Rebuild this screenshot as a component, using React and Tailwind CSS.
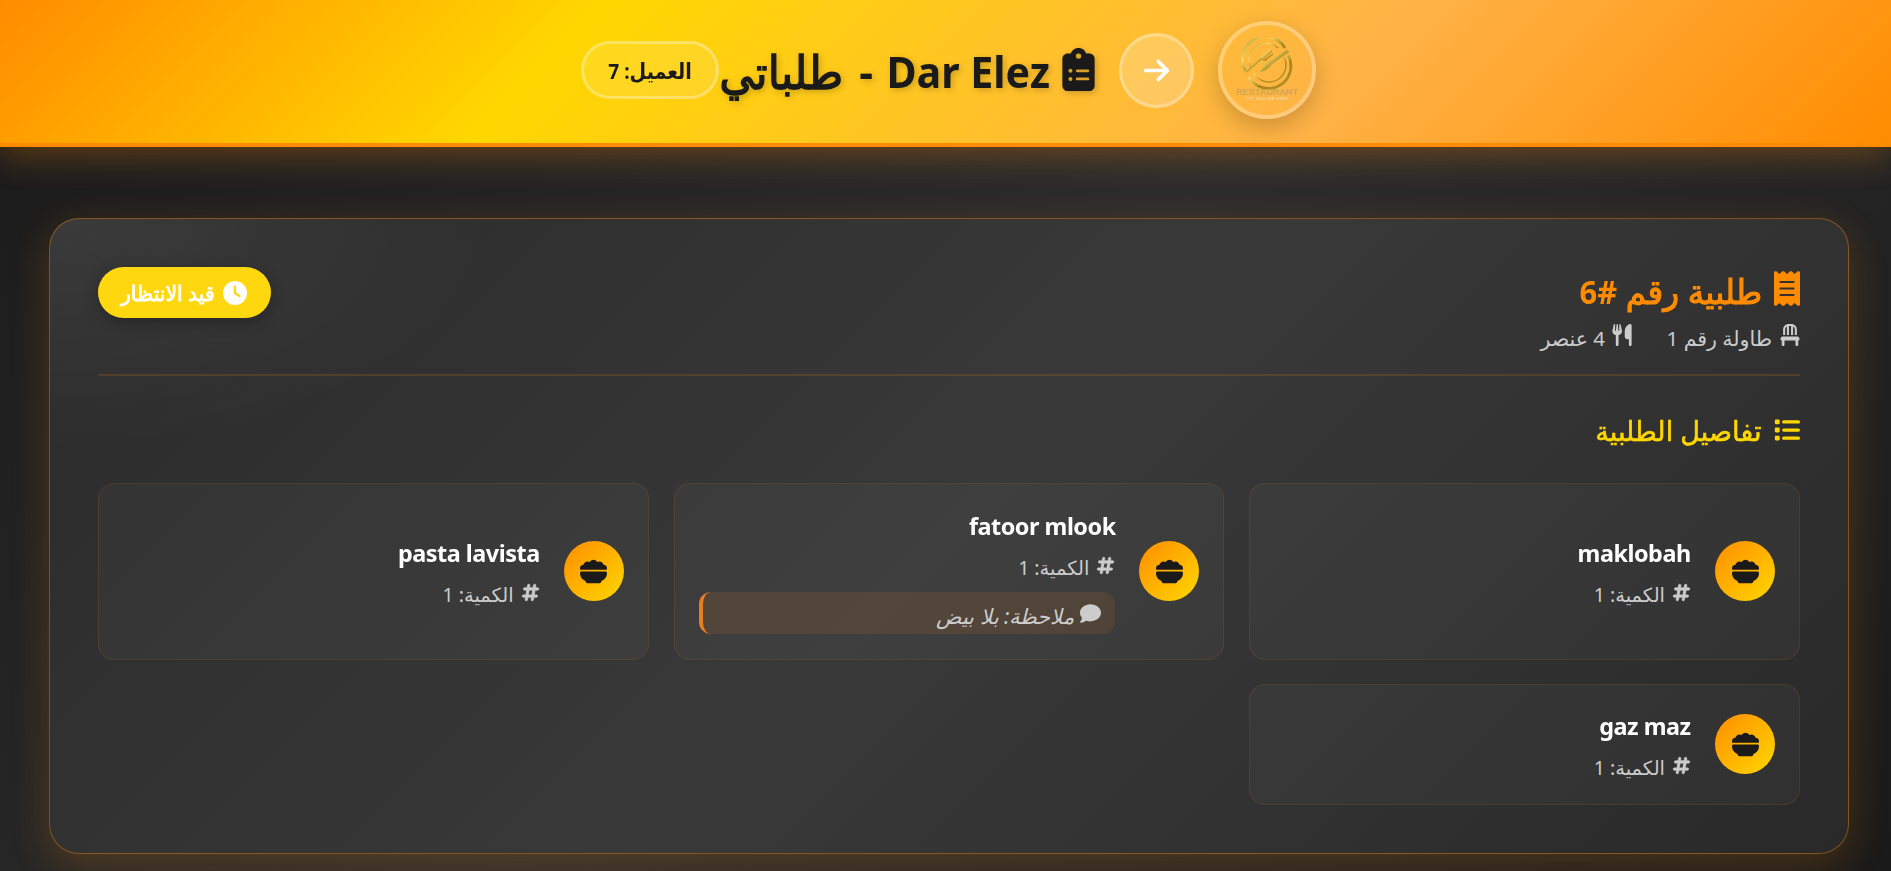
import React from "react";
import { FaClipboardList, FaArrowRight, FaReceipt, FaChair, FaUtensils, FaList, FaBowlFood, FaClock, FaHashtag, FaComment } from "react-icons/fa6";

const AR = "font-['Noto_Sans','DejaVu_Sans',sans-serif]";

function Logo() {
  return (
    <svg width="64" height="64" viewBox="0 0 64 64">
      <defs>
        <linearGradient id="gold" x1="0" y1="0" x2="1" y2="1">
          <stop offset="0" stopColor="#b8962f" />
          <stop offset="0.35" stopColor="#f0d868" />
          <stop offset="0.6" stopColor="#a68420" />
          <stop offset="1" stopColor="#b8942c" />
        </linearGradient>
      </defs>
      <g fill="none" stroke="url(#gold)">
        <path d="M10.500 33A22 22 0 0 1 50 10" strokeWidth="2.800" />
        <path d="M53 17A22 22 0 0 1 14 39" strokeWidth="2.800" />
        <path d="M15.500 29A17 17 0 0 1 43 10" strokeWidth="1.300" />
        <path d="M49 19A17 17 0 0 1 19 35" strokeWidth="1.300" />
        <path d="M11 34L28 19" strokeWidth="2" />
        <path d="M27 19L35 11M29 20L37 13M30 22L38 16M26 17Q26 23 32 22" strokeWidth="1.200" />
      </g>
      <path d="M25 34Q28 27 34 23.500L52 11L54 14L37 26Q32 33 25 34Z" fill="url(#gold)" />
      <text x="32" y="56.500" textAnchor="middle" textLength="62" lengthAdjust="spacingAndGlyphs" fontFamily="Liberation Sans" fontWeight="700" fontSize="8.500" fill="#cfa658">RESTAURANT</text>
      <text x="32" y="61.500" textAnchor="middle" textLength="42" fontFamily="Liberation Sans" fontWeight="700" fontSize="3.500" fill="#f0d8a4">TXT TAGLINE HERE</text>
    </svg>
  );
}

function Item({ name, note }) {
  return (
    <div className="flex items-center gap-6 rounded-[16px] border border-[#ff8c00]/10 bg-white/[0.03] px-6">
      <div className="flex size-[60px] shrink-0 items-center justify-center rounded-full bg-linear-135 from-[#ff8c00] to-[#ffd700] text-[#1a1a1a]">
        <FaBowlFood size={27} />
      </div>
      <div className="min-w-0 grow">
        <div dir="ltr" className="h-9 origin-right scale-x-[0.975] text-right text-[24px] leading-[35px] font-bold tracking-[-0.5px] text-white">{name}</div>
        <div className="mt-2 flex h-7 items-center gap-[7px] text-[#cccccc]">
          <FaHashtag size={19} className="mb-0.5 stroke-current stroke-[20px]" />
          <span className="pt-[3px] text-[19.5px]">الكمية: 1</span>
        </div>
        {note && (
          <div className="mt-3 flex h-[42px] items-center gap-1.5 rounded-[12px] border-l-4 border-[#e67e22] bg-[#e67e22]/12 pr-[14px] text-[#cccccc]">
            <FaComment size={21} />
            <span className="pt-1.5 text-[21px] leading-none italic">{note}</span>
          </div>
        )}
      </div>
    </div>
  );
}

export default function App() {
  return (
    <div dir="rtl" className={`h-[871px] overflow-hidden bg-[linear-gradient(135deg,#1a1a1a_0%,#2d2d2d_50%,#1a1a1a_100%)] ${AR}`}>
      <header className="relative flex h-[147px] items-center justify-center border-b-4 border-[#ff8c00] bg-[linear-gradient(135deg,#ff8c00_0%,#ffd700_30%,#ffb347_70%,#ff8c00_100%)] pb-[3px] pl-[6px] shadow-[0_8px_32px_rgba(255,140,0,0.3)]">
        <div className="ml-6 flex size-[98px] items-center justify-center rounded-full border-4 border-white/30 shadow-[0_8px_25px_rgba(0,0,0,0.2)]">
          <Logo />
        </div>
        <div className="ml-6 flex size-[75px] items-center justify-center rounded-full border-[3px] border-white/30 bg-white/20 text-white">
          <FaArrowRight size={29} />
        </div>
        <h1 className="flex w-[376px] items-center text-[43px] leading-none font-bold whitespace-nowrap text-[#1a1a1a] drop-shadow-[2px_2px_3px_rgba(0,0,0,0.2)]">
          <FaClipboardList size={43} className="mb-0.5 ml-3 w-[33px] shrink-0" />
          <span dir="ltr" className="w-[177px] shrink-0 origin-right scale-x-[0.957] pt-[3px] text-right">Dar Elez</span>
          <span className="w-[30px] shrink-0 pt-[3px]">-</span>
          <span className="w-[122px] shrink-0 origin-right scale-x-[0.945] pt-0.5 text-[46px] font-normal [-webkit-text-stroke:1.4px_#1a1a1a]">طلباتي</span>
        </h1>
        <div className="flex h-[58px] w-[138px] items-center justify-center rounded-full border-[3px] border-white/30 bg-white/10 text-[22px] font-bold text-[#1a1a1a]">
          <span className="scale-x-[0.87] pt-px whitespace-nowrap">العميل: 7</span>
        </div>
      </header>
      <main className="pt-[71px] pr-[42px] pl-[49px]">
        <section className="h-[636px] rounded-[30px] border border-[#ff8c00]/40 bg-[radial-gradient(ellipse_440px_230px_at_0_0,rgba(255,255,255,0.08),transparent),linear-gradient(135deg,#2a2a2a_0%,#393939_50%,#292929_100%)] px-12 pt-12 shadow-[0_12px_40px_rgba(255,140,0,0.2)]">
          <div className="flex h-[109px] items-start justify-between border-b-2 border-[#ff8c00]/15">
            <div>
              <h2 className="flex h-12 items-center gap-[12px] text-[#ff8c00]">
                <FaReceipt size={35} className="mb-1.5 w-[26px]" />
                <span className="origin-right scale-x-[0.965] text-[34px] [-webkit-text-stroke:1.1px_#ff8c00]">طلبية رقم <b className="text-[32px] [-webkit-text-stroke:0]">#6</b></span>
              </h2>
              <div className="flex h-10 items-center text-[20.5px] whitespace-nowrap text-[#cccccc]">
                <FaChair size={22} className="ml-2 w-5" />
                <span className="w-[105px] pt-1.5">طاولة رقم 1</span>
                <FaUtensils size={22} className="mr-[34px] ml-1.5" />
                <span className="pt-1.5">4 عنصر</span>
              </div>
            </div>
            <div className="flex h-[51px] w-[173px] items-center gap-[8px] rounded-full bg-[#ffd70e] pr-6 text-white shadow-[0_4px_15px_rgba(0,0,0,0.3)]">
              <FaClock size={24} className="shrink-0" />
              <span className="origin-right scale-x-[0.97] pt-0.5 text-[21px] whitespace-nowrap [-webkit-text-stroke:0.8px_white]">قيد الانتظار</span>
            </div>
          </div>
          <h3 className="mt-8 flex h-[46px] items-center gap-3 text-[#ffd700]">
            <FaList size={26} className="mb-[3px]" />
            <span className="mb-0.5 origin-right scale-x-[0.97] text-[28px] leading-none [-webkit-text-stroke:0.6px_#ffd700]">تفاصيل الطلبية</span>
          </h3>
          <div className="mt-[28.5px] grid grid-cols-3 grid-rows-[177px_121px] gap-x-[25px] gap-y-6">
            <Item name="maklobah" />
            <Item name="fatoor mlook" note="ملاحظة: بلا بيض" />
            <Item name="pasta lavista" />
            <Item name="gaz maz" />
          </div>
        </section>
      </main>
    </div>
  );
}
